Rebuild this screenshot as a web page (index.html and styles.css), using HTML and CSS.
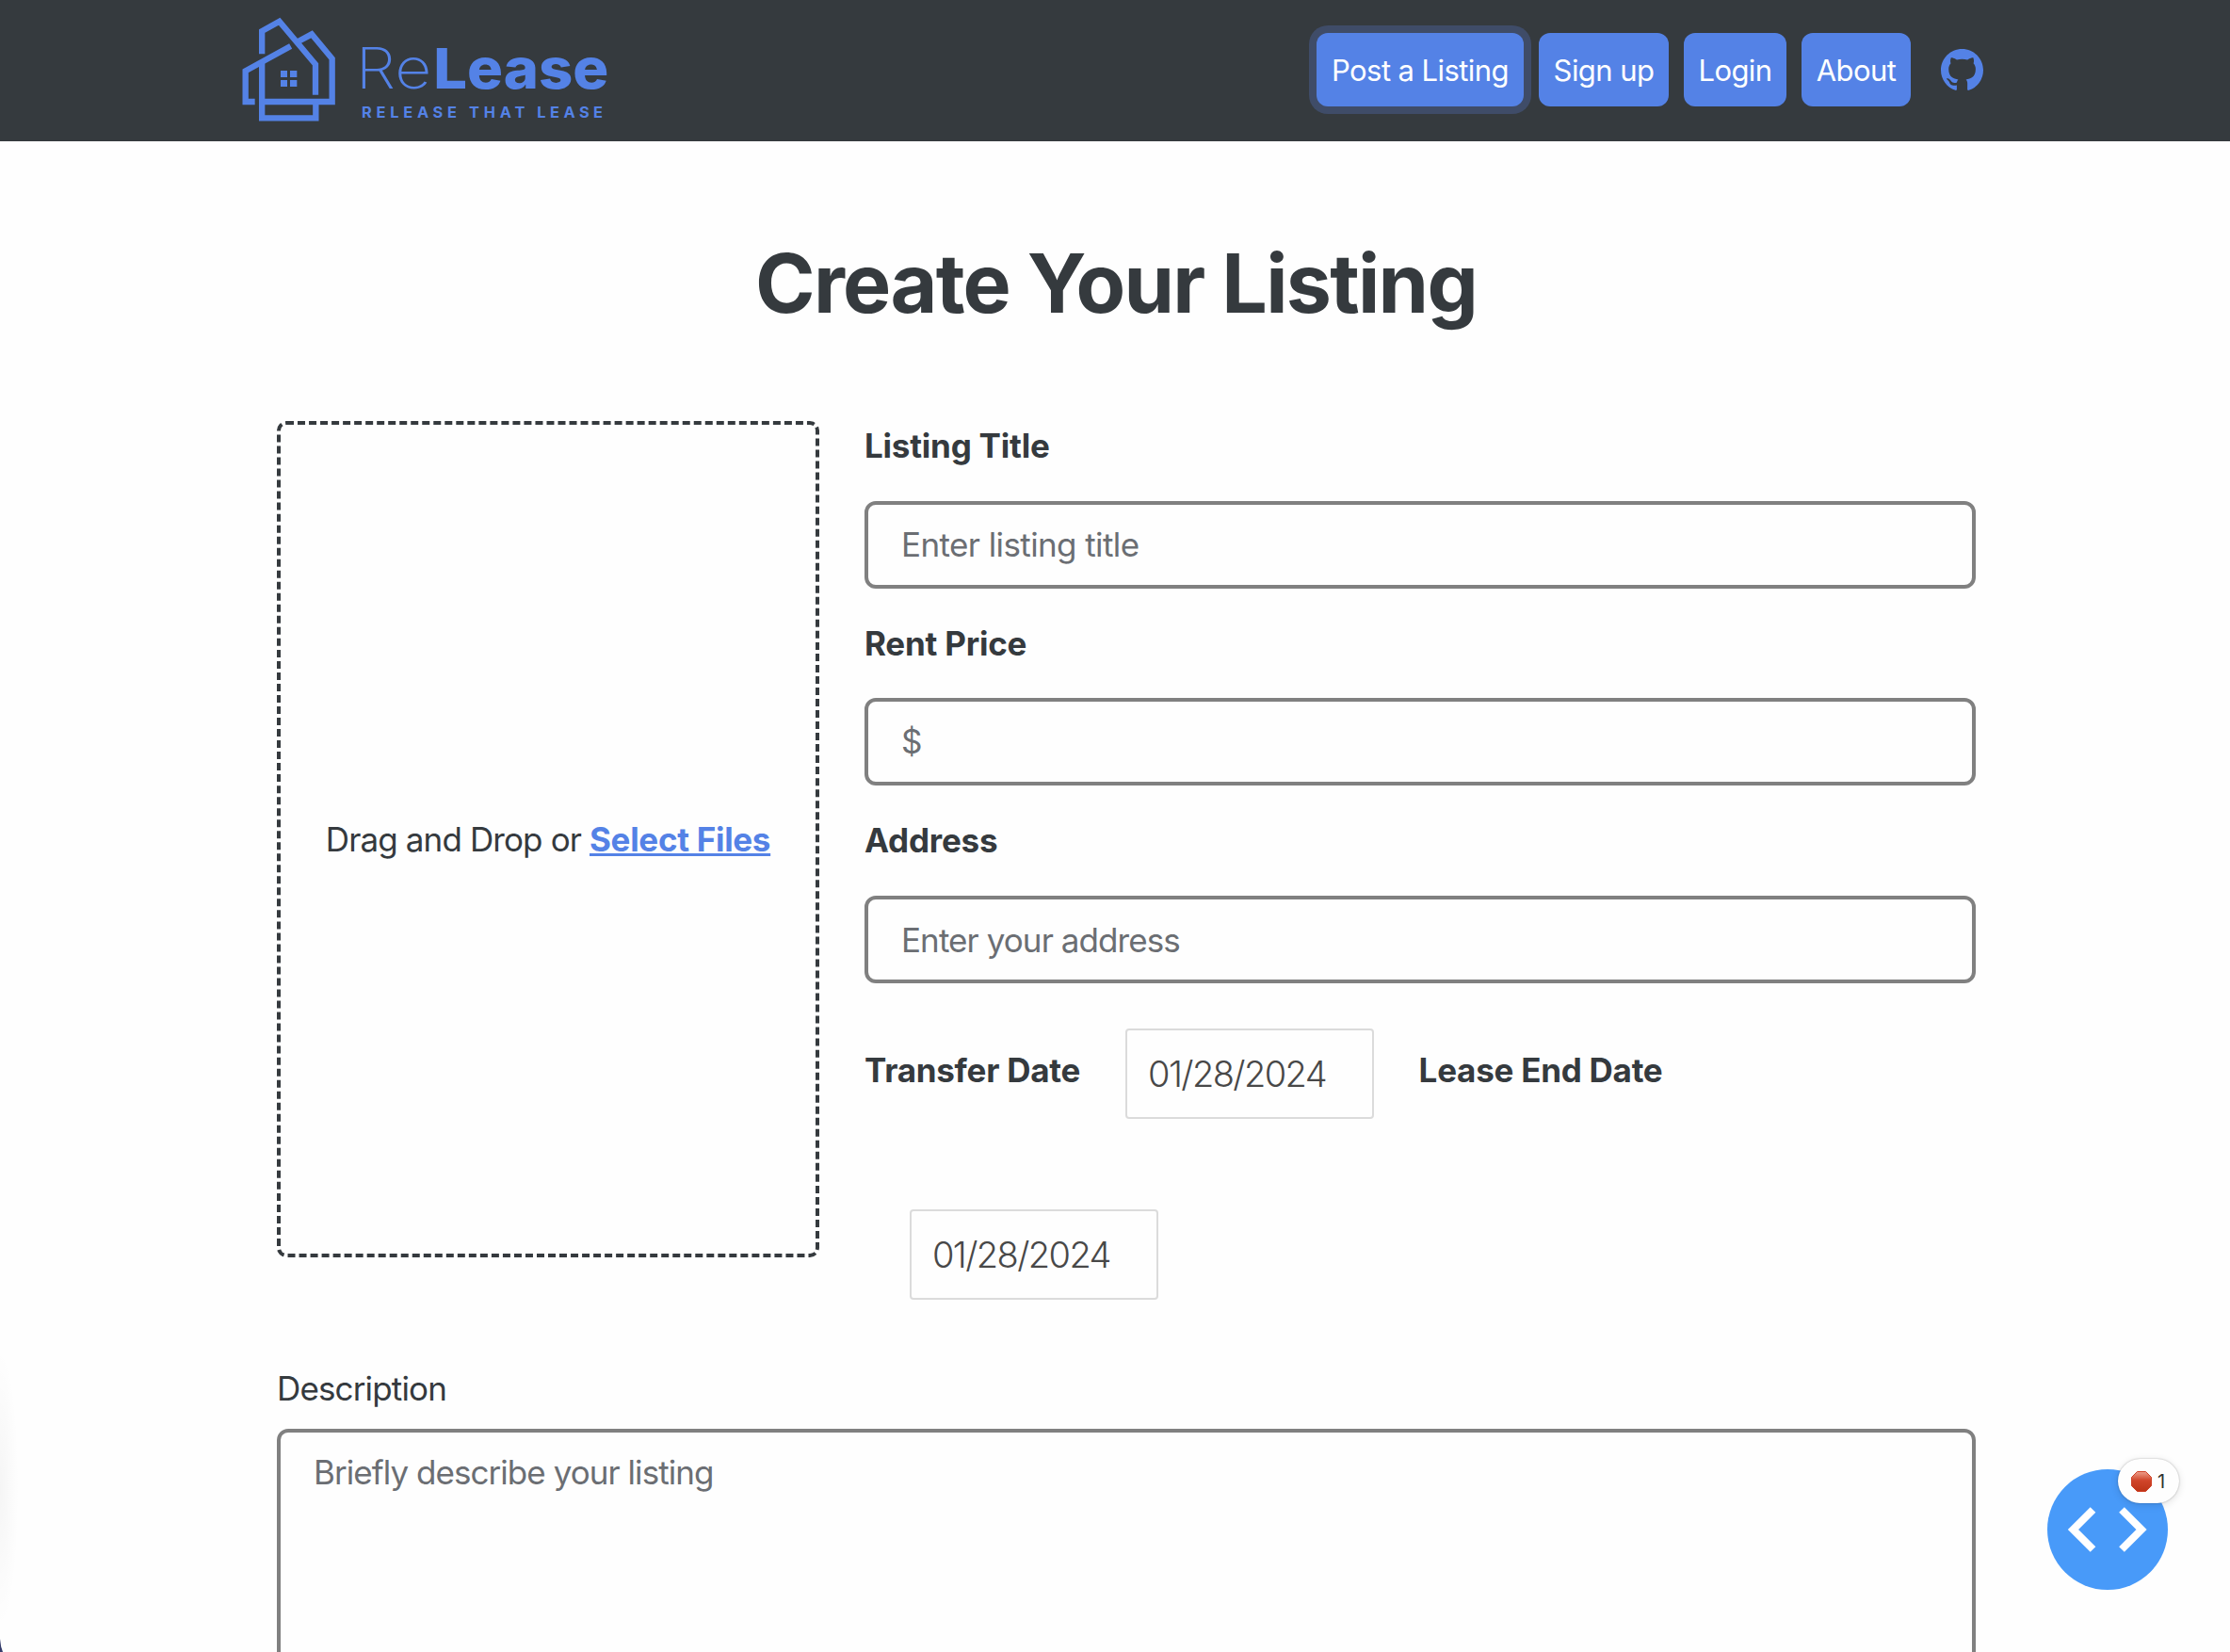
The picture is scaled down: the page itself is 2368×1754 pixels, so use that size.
FILE: index.html
```html
<!DOCTYPE html>
<html lang="en">
<head>
<meta charset="utf-8">
<title>ReLease - Create Your Listing</title>
<link rel="stylesheet" href="styles.css">
</head>
<body>
<header class="navbar">
  <a class="brand" href="#" aria-label="ReLease">
    <svg class="brand-logo" viewBox="0 0 1260 450">
      <g fill="none" stroke="currentColor" stroke-width="19">
        <path d="M114.500 172V99L170 68L285 205V302"/>
        <path d="M230 132L273 109L338 187V324H116"/>
        <path d="M206 147L62 226V324H92"/>
        <path d="M114.500 200V376H286V326"/>
      </g>
      <path fill="currentColor" d="M174 225h21v21h-21zM204 225h22v21h-22zM174 255h21v21h-21zM204 255h22v21h-22z"/>
      <text class="logo-thin" x="413" y="282" textLength="242" lengthAdjust="spacingAndGlyphs">Re</text>
      <text class="logo-bold" x="661" y="282" textLength="558" lengthAdjust="spacingAndGlyphs">Lease</text>
      <text class="logo-tag" x="432" y="375" textLength="303">RELEASE</text>
      <text class="logo-tag" x="774" y="375" textLength="178">THAT</text>
      <text class="logo-tag" x="991" y="375" textLength="209">LEASE</text>
    </svg>
  </a>
  <nav class="nav-links">
    <a class="nav-btn post focused" href="#">Post a Listing</a>
    <a class="nav-btn signup" href="#">Sign up</a>
    <a class="nav-btn login" href="#">Login</a>
    <a class="nav-btn about" href="#">About</a>
    <a class="github" href="#" aria-label="GitHub">
      <svg viewBox="0 0 16 16"><path fill="currentColor" d="M8 0C3.58 0 0 3.58 0 8c0 3.54 2.29 6.53 5.47 7.59.4.07.55-.17.55-.38 0-.19-.01-.82-.01-1.49-2.01.37-2.53-.49-2.69-.94-.09-.23-.48-.94-.82-1.13-.28-.15-.68-.52-.01-.53.63-.01 1.08.58 1.23.82.72 1.210 1.870.87 2.330.66.07-.52.28-.87.51-1.070-1.780-.2-3.640-.89-3.640-3.950 0-.87.31-1.590.82-2.150-.08-.2-.36-1.020.08-2.120 0 0 .67-.21 2.200.82.64-.18 1.320-.27 2-.27s1.360.09 2 .27c1.530-1.040 2.200-.82 2.200-.82.44 1.100.16 1.920.08 2.120.51.56.82 1.270.82 2.150 0 3.070-1.870 3.750-3.650 3.950.29.25.54.73.54 1.480 0 1.070-.01 1.930-.01 2.200 0 .21.15.46.55.38A8.010 8.010 0 0 0 16 8c0-4.420-3.580-8-8-8z"/></svg>
    </a>
  </nav>
</header>

<main class="page">
  <h1 class="title">Create Your Listing</h1>
  <form class="listing">
    <div class="columns">
      <div class="dropzone"><p class="drop-text">Drag and Drop or <a class="drop-link" href="#">Select Files</a></p></div>
      <div class="fields">
        <label class="label" for="title">Listing Title</label>
        <input class="input input-title" id="title" type="text" placeholder="Enter listing title">
        <label class="label label-price" for="price">Rent Price</label>
        <input class="input" id="price" type="text" placeholder="$">
        <label class="label" for="address">Address</label>
        <input class="input" id="address" type="text" placeholder="Enter your address">
        <div class="dates">
          <span class="date-label">Transfer Date</span>
          <div class="date">01/28/2024</div>
          <span class="date-label">Lease End Date</span>
          <div class="date">01/28/2024</div>
        </div>
      </div>
    </div>
    <label class="desc-label" for="desc">Description</label>
    <textarea class="textarea" id="desc" placeholder="Briefly describe your listing"></textarea>
  </form>
</main>

<button class="fab" aria-label="Developer tools">
  <svg class="fab-icon" viewBox="0 0 128 128"><path fill="none" stroke="#fff" stroke-width="8" d="M48.500 43L27.500 64L48.500 85M79 43L100 64L79 85"/></svg>
  <span class="fab-badge">
    <svg class="stop" viewBox="0 0 22 22">
      <defs><linearGradient id="stop-fill" x1="0" y1="0" x2="0" y2="1"><stop offset="0" stop-color="#eda08c"/><stop offset=".45" stop-color="#d0452a"/><stop offset="1" stop-color="#bd3417"/></linearGradient></defs>
      <path fill="url(#stop-fill)" stroke="#cf4127" d="M6.500.5h9l6 6v9l-6 6h-9l-6-6v-9z"/>
    </svg>
    <span>1</span>
  </span>
</button>
</body>
</html>
```
FILE: styles.css
```css
* { box-sizing: border-box; }

html { height: 1754px; overflow: hidden; }

body {
  margin: 0;
  height: 1754px;
  overflow: hidden;
  position: relative;
  background: #fefefe;
  color: #353a3e;
  font-family: Inter, "Liberation Sans", sans-serif;
  font-size: 35px;
  line-height: 54px;
}

/* soft shade along the left window edge */
body::before {
  content: "";
  position: absolute;
  left: 0;
  top: 1430px;
  width: 20px;
  height: 300px;
  background: radial-gradient(ellipse at left, rgba(0, 0, 0, .035), rgba(0, 0, 0, 0) 70%);
}

body::after {
  content: "";
  position: absolute;
  left: 0;
  bottom: 0;
  width: 3px;
  height: 14px;
  background: #353c6b;
  clip-path: polygon(0 0, 40% 60%, 100% 100%, 0 100%);
}

.navbar {
  display: flex;
  justify-content: space-between;
  align-items: flex-start;
  height: 150px;
  padding: 0 262px 0 240px;
  background: #353a3e;
}

.brand { color: #5482e6; }
.brand-logo { display: block; width: 420px; height: 150px; }
.brand-logo text { fill: currentColor; font-family: Inter, sans-serif; }
.logo-thin { font-size: 179px; font-weight: 250; }
.logo-bold { font-size: 179px; font-weight: 800; }
.logo-tag { font-size: 49px; font-weight: 700; }

.nav-links { display: flex; align-items: center; gap: 16px; padding-top: 35px; }

.nav-btn {
  display: flex;
  justify-content: center;
  align-items: center;
  height: 78px;
  padding-top: 2px;
  border-radius: 12px;
  background: #5482e6;
  color: #fff;
  font-size: 31px;
  letter-spacing: -.57px;
  text-decoration: none;
  white-space: nowrap;
}
.post { width: 220px; }
.signup { width: 138px; }
.login { width: 109px; }
.about { width: 116px; }
.focused { box-shadow: 0 0 0 8px #3f4c68; }

.github { width: 45px; height: 45px; margin-left: 16px; color: #5482e6; }
.github svg { display: block; width: 45px; height: 45px; }

.title {
  margin: 0;
  padding: 96px 0 90px 2px;
  font-size: 86px;
  font-weight: 700;
  letter-spacing: -1.72px;
  line-height: 110px;
  text-align: center;
}

.listing { width: 1804px; margin-left: 294px; }
.columns { display: flex; gap: 48px; }

.dropzone {
  display: flex;
  justify-content: center;
  align-items: center;
  width: 576px;
  height: 888px;
  margin-top: 1px;
  border: 4px dashed #353a3e;
  border-radius: 10px;
}
.drop-text { margin: 0; letter-spacing: -.88px; white-space: nowrap; }
.drop-link {
  color: #5482e6;
  font-weight: 700;
  letter-spacing: -.3px;
  text-decoration-thickness: 3px;
}

.fields { width: 1180px; }
.label {
  display: block;
  margin-bottom: 32px;
  font-weight: 700;
  letter-spacing: -.22px;
}
.label-price { margin-bottom: 31px; }

.input, .textarea {
  display: block;
  width: 100%;
  border: 4px solid #808080;
  border-radius: 12px;
  background: #fefefe;
  color: inherit;
  font: inherit;
  letter-spacing: -.92px;
  outline: 0;
}
.input { height: 93px; margin-bottom: 31px; padding: 0 35px 2px; }
.input-title { letter-spacing: -.6px; }
.input:last-of-type { margin-bottom: 0; padding-bottom: 0; }
::placeholder { color: #6b6e73; opacity: 1; }

.dates { display: flex; flex-wrap: wrap; align-items: flex-start; }
.date-label {
  margin-top: 65px;
  font-weight: 700;
  letter-spacing: -.25px;
  white-space: nowrap;
}
.date {
  display: flex;
  align-items: center;
  width: 263.5px;
  height: 96px;
  margin: 48px;
  padding-left: 22px;
  border: 2px solid #dbdbdb;
  border-radius: 4px;
  color: #484848;
  font-size: 38px;
  font-weight: 300;
  letter-spacing: -1.6px;
}

.desc-label { display: block; margin: 19px 0 16px; letter-spacing: -.85px; }
.textarea { height: 300px; padding: 15px 35px; letter-spacing: -.95px; resize: none; }

.fab {
  position: absolute;
  left: 2174px;
  top: 1560px;
  width: 128px;
  height: 128px;
  padding: 0;
  border: 0;
  border-radius: 50%;
  background: #489af9;
}
.fab-icon { display: block; width: 128px; height: 128px; }
.fab-badge {
  position: absolute;
  left: 75px;
  top: -11px;
  display: flex;
  align-items: center;
  gap: 6px;
  width: 65px;
  height: 47px;
  padding-left: 14px;
  border-radius: 24px;
  background: #fefefe;
  box-shadow: 0 0 2px rgba(0, 0, 0, .3), 0 2px 8px rgba(0, 0, 0, .12);
  color: #333;
  font: 20px Inter, sans-serif;
}
.stop { width: 22px; height: 22px; }
```
